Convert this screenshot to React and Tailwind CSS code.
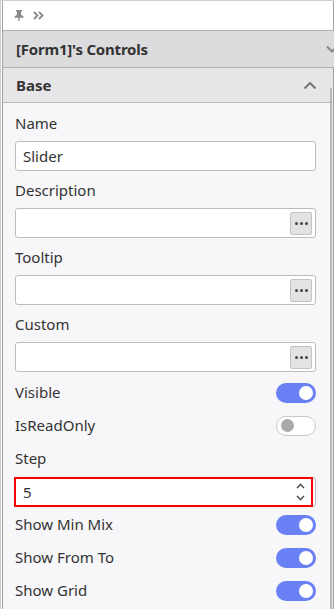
import React from "react";

function Ellipsis() {
  return (
    <div className="absolute right-[3px] top-[3px] flex h-[23px] w-[22px] items-center justify-center gap-[2px] rounded-[2px] border border-[#c4c4c6] bg-[#e3e3e6]">
      <span className="h-[3px] w-[3px] rounded-full bg-[#444]" />
      <span className="h-[3px] w-[3px] rounded-full bg-[#444]" />
      <span className="h-[3px] w-[3px] rounded-full bg-[#444]" />
    </div>
  );
}

function TextField({ label, value, button }) {
  return (
    <div className="flex flex-col">
      <div className="flex h-[37px] items-end pb-[8px] leading-[20px]">{label}</div>
      <div className="relative h-[30px] rounded-[3px] border border-[#bdbdbd] bg-white pl-[7px] leading-[28px]">
        {value}
        {button && <Ellipsis />}
      </div>
    </div>
  );
}

function Toggle({ on }) {
  return on ? (
    <div className="flex h-[20px] w-[40px] items-center justify-end rounded-full bg-[#6a80f5] pr-[3px]">
      <span className="h-[14px] w-[14px] rounded-full bg-white" />
    </div>
  ) : (
    <div className="flex h-[20px] w-[40px] items-center rounded-full border border-[#c9c9c9] bg-white pl-[4px]">
      <span className="h-[13px] w-[13px] rounded-full bg-[#a9a9a9]" />
    </div>
  );
}

function ToggleRow({ label, on }) {
  return (
    <div className="flex h-[33px] items-center justify-between">
      <span>{label}</span>
      <Toggle on={on} />
    </div>
  );
}

export default function App() {
  return (
    <div
      className="h-[609px] w-[334px] overflow-hidden border-l border-t border-[#cfcfcf] bg-white pl-[1px] text-[15px] text-[#333]"
      style={{ fontFamily: '"Noto Sans", "Open Sans", sans-serif' }}
    >
      <div className="flex h-full flex-col border-l border-[#a3a3a3]">
        {/* toolbar */}
        <div className="flex h-[29px] items-center gap-[9px] border-r border-[#a3a3a3] pl-[11px]">
          <svg width="10" height="11" viewBox="0 0 10 11" fill="#8a8a8a">
            <path d="M2 0h6v1.5H7v3l2.5 2v1.3H5.7V11H4.3V7.8H.5V6.5L3 4.5v-3H2z" />
          </svg>
          <svg width="11" height="9" viewBox="0 0 11 9" fill="none" stroke="#8a8a8a" strokeWidth="1.8">
            <path d="M1 1l3.5 3.5L1 8M6 1l3.5 3.5L6 8" />
          </svg>
        </div>
        {/* form header */}
        <div className="flex h-[38px] items-center justify-between border-y border-[#b3b3b3] bg-[#dcdcdf] pl-[13px] pr-0 font-bold tracking-[-0.2px]">
          <span>[Form1]'s Controls</span>
          <svg width="12" height="8" viewBox="0 0 12 8" fill="none" stroke="#888" strokeWidth="2" className="-mr-[4px]">
            <path d="M1 1.5l5 5 5-5" />
          </svg>
        </div>
        <div className="flex min-h-0 flex-1">
          <div className="flex min-w-0 flex-1 flex-col bg-[#f7f7f9]">
            {/* base header */}
            <div className="flex h-[35px] items-center justify-between border-b border-[#b9b9b9] bg-[#e7e7ea] pl-[13px] pr-[13px] font-bold">
              <span>Base</span>
              <svg width="14" height="9" viewBox="0 0 14 9" fill="none" stroke="#777" strokeWidth="2">
                <path d="M1.5 7.5l5.5-5.5 5.5 5.5" />
              </svg>
            </div>
            <div className="flex flex-col pl-[12px] pr-[14px] pt-[1px]">
              <TextField label="Name" value="Slider" />
              <TextField label="Description" value="" button />
              <TextField label="Tooltip" value="" button />
              <TextField label="Custom" value="" button />
              <div className="mt-[4px]">
                <ToggleRow label="Visible" on />
                <ToggleRow label="IsReadOnly" on={false} />
              </div>
              <div className="flex h-[33px] items-center">Step</div>
              <div className="relative mt-[2px] h-[30px] rounded-[3px] border border-[#bdbdbd] bg-white pl-[7px] leading-[28px]">
                5
                <div className="pointer-events-none absolute -left-[2px] -top-[1px] bottom-[-1px] right-[2px] border-2 border-[#ff0000]" />
                <div className="absolute right-[10px] top-[5px] flex flex-col gap-[6px]">
                  <svg width="9" height="6" viewBox="0 0 9 6" fill="none" stroke="#555" strokeWidth="1.6">
                    <path d="M1 5l3.5-3.5L8 5" />
                  </svg>
                  <svg width="9" height="6" viewBox="0 0 9 6" fill="none" stroke="#555" strokeWidth="1.6">
                    <path d="M1 1l3.5 3.5L8 1" />
                  </svg>
                </div>
              </div>
              <div className="mt-[1px]">
                <ToggleRow label="Show Min Mix" on />
                <ToggleRow label="Show From To" on />
                <ToggleRow label="Show Grid" on />
              </div>
            </div>
          </div>
          {/* scrollbar */}
          <div className="flex w-[3px] flex-col bg-[#e6e6e8]">
            <div className="mt-[20px] h-full w-[2px] bg-[#b9b9bc]" />
          </div>
          <div className="w-[1px] bg-[#a3a3a3]" />
        </div>
      </div>
    </div>
  );
}
